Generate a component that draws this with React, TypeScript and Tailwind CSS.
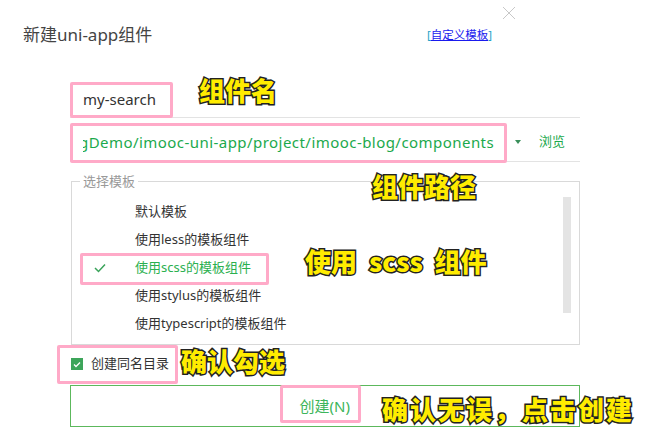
import React from "react";

const templates = [
  { label: "默认模板", checked: false },
  { label: "使用less的模板组件", checked: false },
  { label: "使用scss的模板组件", checked: true },
  { label: "使用stylus的模板组件", checked: false },
  { label: "使用typescript的模板组件", checked: false },
];

// yellow "marker" notes drawn over the screenshot
const notes = [
  { text: "组件名", cls: "left-[199px] top-[75px]" },
  { text: "组件路径", cls: "left-[372px] top-[171px]" },
  { text: "使用  scss  组件", cls: "left-[305px] top-[246px]" },
  { text: "确认勾选", cls: "left-[181px] top-[346px]" },
  { text: "确认无误，点击创建", cls: "left-[382px] top-[394px] tracking-[2px]" },
];

// pink highlight frames
const frames = [
  "left-[70px] top-[82px] w-[103px] h-[36px]",
  "left-[70px] top-[123px] w-[437px] h-[40px]",
  "left-[80px] top-[253px] w-[189px] h-[32px]",
  "left-[57px] top-[345px] w-[121px] h-[39px]",
  "left-[280px] top-[385px] w-[81px] h-[38px]",
];

export default function App() {
  return (
    <div className="relative w-[659px] h-[436px] overflow-hidden bg-white text-[#333] font-['Noto_Sans','Noto_Sans_CJK_SC',sans-serif]">
      {/* Header */}
      <div className="flex items-center justify-between pl-[23px] pr-[167px] pt-[23px]">
        <h1 className="text-[17px] leading-[24px] font-normal text-[#444]">
          新建uni-app组件
        </h1>
        <span className="text-[11.5px] leading-[24px] text-[#22a3c7]">
          [<span className="text-[#1a1aee] underline">自定义模板</span>]
        </span>
      </div>

      {/* Component name */}
      <div className="ml-[70px] mt-[35px] w-[510px] h-[36px] border-b border-[#e3e3e3] flex items-center pl-[13px]">
        <span className="text-[15px] text-[#333]">my-search</span>
      </div>

      {/* Path */}
      <div className="ml-[70px] mt-[5px] w-[510px] h-[39px] border-b border-[#e3e3e3] flex items-center">
        <div className="ml-[13px] w-[412px] overflow-hidden whitespace-nowrap">
          <span className="block ml-[-4px] text-[15px] tracking-[0.45px] text-[#1ba94c]">
            gDemo/imooc-uni-app/project/imooc-blog/components
          </span>
        </div>
        <svg className="ml-[20px] w-[6px] h-[4px]" viewBox="0 0 6 4">
          <path d="M0 0h6L3 4z" fill="#3a8f5a" />
        </svg>
        <span className="ml-[18px] text-[13px] text-[#1ba94c]">浏览</span>
      </div>

      {/* Template chooser */}
      <fieldset className="ml-[71px] mt-[13px] w-[509px] h-[170px] border border-[#d9d9d9]">
        <legend className="ml-[8px] px-[3px] text-[13px] leading-[13px] text-[#999]">
          选择模板
        </legend>
        <div className="flex justify-between pt-[9px]">
          <div className="flex flex-col pt-[1px]">
            {templates.map((t) => (
              <div key={t.label} className="flex items-center h-[28px] pl-[22px]">
                <span className="w-[41px] flex">
                  {t.checked && (
                    <svg className="w-[12px] h-[10px]" viewBox="0 0 12 10">
                      <path
                        d="M1 5l3.5 3.5L11 1.5"
                        fill="none"
                        stroke="#3aa35a"
                        strokeWidth="1.5"
                      />
                    </svg>
                  )}
                </span>
                <span
                  className={
                    t.checked
                      ? "text-[13px] text-[#2bb04f]"
                      : "text-[13px] text-[#333]"
                  }
                >
                  {t.label}
                </span>
              </div>
            ))}
          </div>
          <div className="mr-[8px] w-[8px] h-[116px] bg-[#e4e4e4]" />
        </div>
      </fieldset>

      {/* Same-name folder */}
      <div className="ml-[71px] mt-[13px] flex items-center gap-[8px] h-[12px]">
        <span className="w-[12px] h-[12px] bg-[#3da55a] flex items-center justify-center">
          <svg className="w-[8px] h-[7px]" viewBox="0 0 8 7">
            <path d="M1 3.5l2 2L7 1.5" fill="none" stroke="white" strokeWidth="1.3" />
          </svg>
        </span>
        <span className="text-[13px] text-[#333]">创建同名目录</span>
      </div>

      {/* Footer */}
      <div className="ml-[70px] mt-[15px] w-[510px] h-[42px] border border-[#5cb85c] flex items-center justify-end pr-[229px]">
        <span className="text-[15px] text-[#3cb55a]">创建(N)</span>
      </div>

      {/* Close */}
      <svg className="absolute left-[502px] top-[6px] w-[14px] h-[14px]" viewBox="0 0 14 14">
        <path d="M1 1l12 12M13 1L1 13" stroke="#c8c8c8" strokeWidth="1" />
      </svg>

      {frames.map((f) => (
        <div
          key={f}
          className={`absolute ${f} border-[3px] border-[#ffaac8] rounded-[2px]`}
        />
      ))}

      {notes.map((n) => (
        <span
          key={n.text}
          className={`absolute ${n.cls} whitespace-pre text-[26px] leading-[30px] font-black text-[#ffec00] [-webkit-text-stroke:3px_#222] [paint-order:stroke_fill] font-['Noto_Sans_CJK_SC',sans-serif]`}
        >
          {n.text}
        </span>
      ))}
    </div>
  );
}
